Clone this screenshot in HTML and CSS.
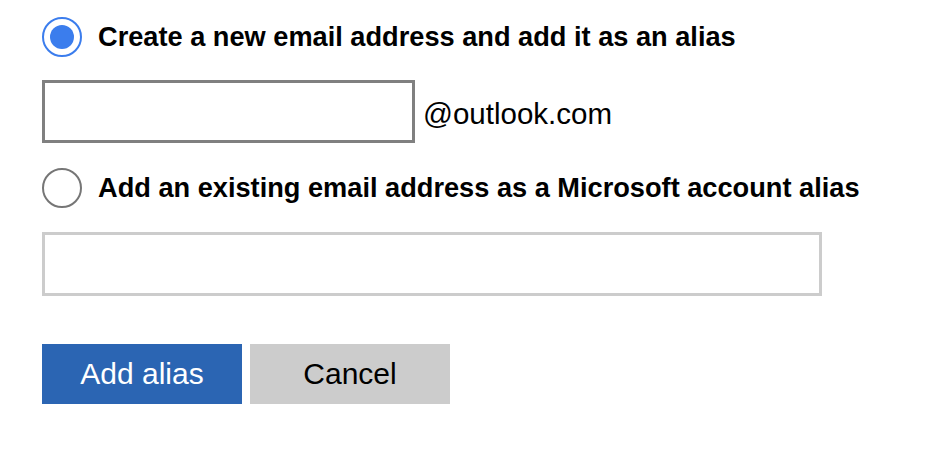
FILE: index.html
```html
<!DOCTYPE html>
<html>
<head>
<meta charset="utf-8">
<link rel="stylesheet" href="styles.css">
</head>
<body>
<form class="alias-form">
  <label class="option">
    <span class="radio checked"><span class="dot"></span></span>
    <span class="option-text">Create a new email address and add it as an alias</span>
  </label>
  <div class="new-row">
    <span class="field field-new"></span>
    <span class="domain">@outlook.com</span>
  </div>
  <label class="option option-2">
    <span class="radio"></span>
    <span class="option-text">Add an existing email address as a Microsoft account alias</span>
  </label>
  <div class="existing-row">
    <span class="field field-existing"></span>
  </div>
  <div class="actions">
    <button type="button" class="btn btn-primary">Add alias</button>
    <button type="button" class="btn btn-secondary">Cancel</button>
  </div>
</form>
</body>
</html>
```
FILE: styles.css
```css
html, body {
  margin: 0;
  padding: 0;
  background: #ffffff;
}
body {
  font-family: "Liberation Sans", Arial, Helvetica, sans-serif;
  color: #000;
}
.alias-form {
  display: flex;
  flex-direction: column;
  padding: 17px 0 0 42px;
}
.option {
  display: flex;
  align-items: center;
  height: 40px;
}
.option-2 {
  margin-top: 25px;
}
.radio {
  box-sizing: border-box;
  width: 40px;
  height: 40px;
  border-radius: 50%;
  border: 2px solid #767676;
  display: flex;
  align-items: center;
  justify-content: center;
  flex: none;
}
.radio.checked {
  border-color: #3b7ded;
}
.dot {
  width: 24px;
  height: 24px;
  border-radius: 50%;
  background: #3b7ded;
}
.option-text {
  margin-left: 16px;
  font-weight: bold;
  font-size: 27.2px;
  line-height: 40px;
  white-space: nowrap;
}
.new-row {
  display: flex;
  align-items: center;
  margin-top: 23px;
}
.field {
  box-sizing: border-box;
  display: block;
  height: 63px;
  border: 3px solid #808080;
  background: #fff;
}
.field-new {
  width: 373px;
}
.domain {
  margin-left: 8px;
  margin-top: 4px;
  font-size: 29.5px;
  line-height: 40px;
}
.existing-row {
  margin-top: 24px;
}
.field-existing {
  width: 780px;
  height: 64px;
  border-color: #cccccc;
}
.actions {
  display: flex;
  gap: 8px;
  margin-top: 48px;
}
.btn {
  width: 200px;
  height: 60px;
  border: none;
  padding: 0;
  font-family: "Liberation Sans", Arial, Helvetica, sans-serif;
  font-size: 30px;
  cursor: pointer;
}
.btn-primary {
  background: #2b65b3;
  color: #fff;
}
.btn-secondary {
  background: #cccccc;
  color: #000;
}
```
